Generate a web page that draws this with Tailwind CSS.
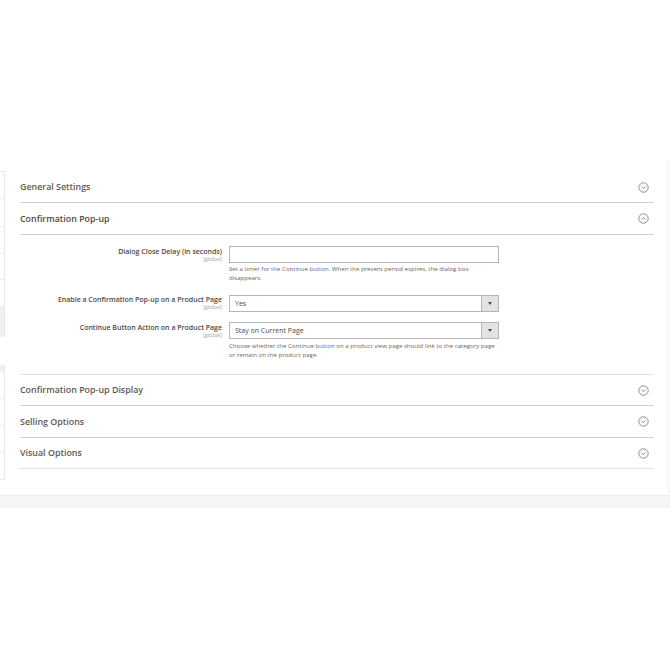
<!DOCTYPE html>
<html lang="en">
<head>
    <meta charset="UTF-8">
    <title>Confirmation Pop-up</title>
    <script src="https://cdn.jsdelivr.net/npm/@tailwindcss/browser@4"></script>
</head>
<body class="bg-white">
    <div class="w-[670px] h-[670px] overflow-hidden pt-[160px] font-['Open_Sans',sans-serif] text-[#514943]">
        <div class="flex w-[669px] h-[335px] border-r border-[#f2f2f2]">
            <!-- sidebar edge -->
            <div class="w-[5px] shrink-0 pt-[11px]">
                <div class="border-r border-t border-[#e8e8e8] h-[166px] flex flex-col">
                    <div class="h-[27px] border-b border-[#eeeeee]"></div>
                    <div class="h-[28px] border-b border-[#eeeeee]"></div>
                    <div class="h-[27px] border-b border-[#eeeeee]"></div>
                    <div class="h-[27px] border-b border-[#eeeeee]"></div>
                    <div class="h-[27px] border-b border-[#eeeeee]"></div>
                    <div class="h-[30px] bg-[#f1f1f1]"></div>
                </div>
                <div class="mt-[28px] border-r border-b border-[#e8e8e8] h-[115px] flex flex-col">
                    <div class="h-[7px] bg-[#f1f1f1]"></div>
                    <div class="h-[27px] border-b border-[#eeeeee]"></div>
                    <div class="h-[28px] border-b border-[#eeeeee]"></div>
                    <div class="h-[26px] border-b border-[#eeeeee]"></div>
                    <div class="h-[27px]"></div>
                </div>
            </div>

            <div class="w-[634px] ml-[15px]">
                <!-- General Settings -->
                <div class="h-[43px] pt-[12px] flex items-center justify-between border-b border-[#d0d0d0] pr-[5.5px]">
                    <h3 class="text-[8.9px] font-semibold text-[#5f5852]">General Settings</h3>
                    <svg class="w-[11px] h-[11px]" viewBox="0 0 11 11" fill="none" stroke="#77706b" stroke-width="0.8"><circle cx="5.5" cy="5.5" r="4.7"/><path d="M3.5 4.8 5.5 6.6 7.5 4.8"/></svg>
                </div>
                <!-- Confirmation Pop-up -->
                <div class="h-[32px] flex items-center justify-between border-b border-[#d0d0d0] pr-[5.5px]">
                    <h3 class="text-[8.9px] font-semibold text-[#514943]">Confirmation Pop-up</h3>
                    <svg class="w-[11px] h-[11px]" viewBox="0 0 11 11" fill="none" stroke="#77706b" stroke-width="0.8"><circle cx="5.5" cy="5.5" r="4.7"/><path d="M3.5 6.4 5.5 4.6 7.5 6.4"/></svg>
                </div>
                <div class="pt-[11px] pb-[15px] border-b border-[#e3e3e3]">
                    <div class="flex">
                        <div class="w-[202px] text-right pt-[1px]">
                            <div class="text-[7px] leading-[9px] font-semibold">Dialog Close Delay (in seconds)</div>
                            <div class="text-[5.5px] leading-[6px] text-[#a8a29e]">[global]</div>
                        </div>
                        <div class="w-[270px] ml-[7px]">
                            <div class="h-[17px] border border-[#b5b5b5] bg-white"></div>
                            <p class="mt-[2px] w-[262px] text-[6.1px] leading-[8.5px] text-[#6b6560]">Set a timer for the Continue button. When the present period expires, the dialog box disappears.</p>
                        </div>
                    </div>
                    <div class="flex mt-[13px]">
                        <div class="w-[202px] text-right">
                            <div class="text-[7px] leading-[9px] font-semibold">Enable a Confirmation Pop-up on a Product Page</div>
                            <div class="text-[5.5px] leading-[6px] text-[#a8a29e]">[global]</div>
                        </div>
                        <div class="w-[270px] ml-[7px] h-[17px] border border-[#b5b5b5] flex items-center">
                            <span class="flex-1 pl-[5px] pt-[1px] text-[7px]">Yes</span>
                            <span class="w-[17px] h-full bg-[#e3e3e3] border-l border-[#b5b5b5] flex items-center justify-center">
                                <svg class="w-[4px] h-[3px]" viewBox="0 0 4 3"><path d="M0 0h4L2 3z" fill="#514943"/></svg>
                            </span>
                        </div>
                    </div>
                    <div class="flex mt-[10px]">
                        <div class="w-[202px] text-right pt-[1px]">
                            <div class="text-[7px] leading-[9px] font-semibold">Continue Button Action on a Product Page</div>
                            <div class="text-[5.5px] leading-[6px] text-[#a8a29e]">[global]</div>
                        </div>
                        <div class="w-[270px] ml-[7px]">
                            <div class="h-[17px] border border-[#b5b5b5] flex items-center">
                                <span class="flex-1 pl-[5px] pt-[1px] text-[7px]">Stay on Current Page</span>
                                <span class="w-[17px] h-full bg-[#e3e3e3] border-l border-[#b5b5b5] flex items-center justify-center">
                                    <svg class="w-[4px] h-[3px]" viewBox="0 0 4 3"><path d="M0 0h4L2 3z" fill="#514943"/></svg>
                                </span>
                            </div>
                            <p class="mt-[3px] w-[266px] text-[6.1px] leading-[8.5px] text-[#6b6560]">Choose whether the Continue button on a product view page should link to the category page or remain on the product page.</p>
                        </div>
                    </div>
                </div>
                <!-- collapsed sections -->
                <div class="h-[31px] flex items-center justify-between border-b border-[#d0d0d0] pr-[5.5px]">
                    <h3 class="text-[8.9px] font-semibold text-[#5f5852]">Confirmation Pop-up Display</h3>
                    <svg class="w-[11px] h-[11px]" viewBox="0 0 11 11" fill="none" stroke="#77706b" stroke-width="0.8"><circle cx="5.5" cy="5.5" r="4.7"/><path d="M3.5 4.8 5.5 6.6 7.5 4.8"/></svg>
                </div>
                <div class="h-[32px] flex items-center justify-between border-b border-[#d0d0d0] pr-[5.5px]">
                    <h3 class="text-[8.9px] font-semibold text-[#5f5852]">Selling Options</h3>
                    <svg class="w-[11px] h-[11px]" viewBox="0 0 11 11" fill="none" stroke="#77706b" stroke-width="0.8"><circle cx="5.5" cy="5.5" r="4.7"/><path d="M3.5 4.8 5.5 6.6 7.5 4.8"/></svg>
                </div>
                <div class="h-[31px] flex items-center justify-between border-b border-[#e3e3e3] pr-[5.5px]">
                    <h3 class="text-[8.9px] font-semibold text-[#5f5852]">Visual Options</h3>
                    <svg class="w-[11px] h-[11px]" viewBox="0 0 11 11" fill="none" stroke="#77706b" stroke-width="0.8"><circle cx="5.5" cy="5.5" r="4.7"/><path d="M3.5 4.8 5.5 6.6 7.5 4.8"/></svg>
                </div>
            </div>
        </div>
        <!-- footer band -->
        <div class="h-[13px] bg-[#f5f5f5] border-t border-[#ececec]"></div>
    </div>
</body>
</html>
